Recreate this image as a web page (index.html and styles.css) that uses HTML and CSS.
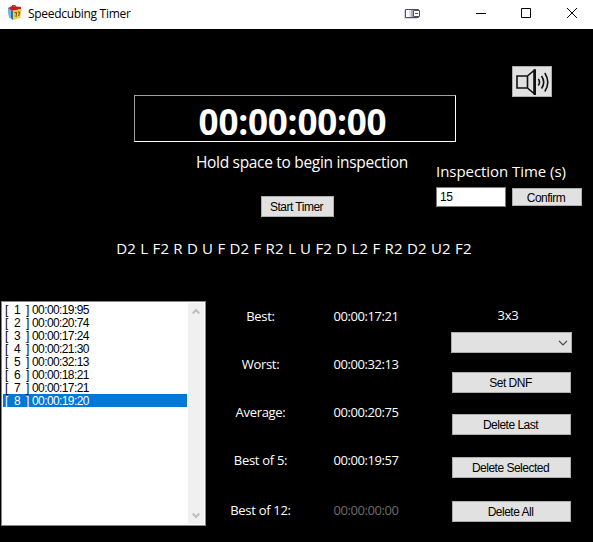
FILE: index.html
```html
<!DOCTYPE html>
<html lang="en">
<head>
<meta charset="utf-8">
<title>Speedcubing Timer</title>
<link rel="stylesheet" href="styles.css">
</head>
<body>
<header class="titlebar">
  <svg class="app-icon" width="16" height="16" viewBox="0 0 16 16">
    <path d="M1 3 6 6v9l-4-3z" fill="#2870b8"/>
    <path d="M1 3l3 1.500v9L2 12z" fill="#70b8d8"/>
    <path d="M1 3 5 1l9 1v2L6 6z" fill="#c51c20"/>
    <path d="M5 1 7 0l2 1.500" fill="none" stroke="#701010"/>
    <path d="M6 5.500l8.500-1.500-1.200 9L6 15z" fill="#f4cb44"/>
    <path d="M7.500 7.500h2l-.5 4.500M10.800 7h1.700l-.8 4" fill="none" stroke="#5c3b08" stroke-width=".9"/>
  </svg>
  <span class="app-title">Speedcubing Timer</span>
  <svg class="dock-icon" width="18" height="13" viewBox="0 0 18 13">
    <path d="M0 2h13v9H0z" fill="#d4d4da"/>
    <path d="M1.500 1.500h13v8h-13z" fill="#fff" stroke="#50505e"/>
    <path d="M5 2h2v7H5z" fill="#e2e2e6"/><path d="M7 2h2v7H7z" fill="#aaaab2"/>
    <path d="M9.500 2.500h6v6h-6z" fill="#fff" stroke="#50505e"/><path d="M11 5.500h3" stroke="#50505e"/>
  </svg>
  <svg class="window-controls" width="103" height="12" viewBox="0 0 103 12" fill="none" stroke="#000">
    <path d="M0 6.500h10"/><path d="M45.500 1.500h9v9h-9z"/><path d="M91 1l10 10M101 1 91 11"/>
  </svg>
</header>
<main>
  <section class="clock-row">
    <div class="clock"><span>00:00:00:00</span></div>
    <button class="sound" aria-label="Sound">
      <svg width="38" height="29" viewBox="0 0 38 29" fill="none" stroke="#111" stroke-width="1.600">
        <path d="M4 9h10.500v12H4zM14.500 9l6.500-5.500v23L14.500 21M22.200 2.200v25.600M20.500 3h2.500M20.500 27.200h2.500"/>
        <path d="M25.300 12q2.400 3.200 0 6.500M28.500 9q4.400 6.200 0 12.500M31.800 6q6 9.200 0 18.500"/>
      </svg>
    </button>
  </section>
  <section class="controls-row">
    <div class="start-group">
      <p class="hint">Hold space to begin inspection</p>
      <button class="button start">Start Timer</button>
    </div>
    <div class="inspection">
      <label class="inspection-label" for="seconds">Inspection Time (s)</label>
      <div class="inspection-form">
        <input id="seconds" type="text" value="15">
        <button class="button confirm">Confirm</button>
      </div>
    </div>
  </section>
  <p class="scramble">D2 L F2 R D U F D2 F R2 L U F2 D L2 F R2 D2 U2 F2</p>
  <section class="results">
    <div class="listbox">
      <ul>
        <li><span class="num">1</span>00:00:19:95</li>
        <li><span class="num">2</span>00:00:20:74</li>
        <li><span class="num">3</span>00:00:17:24</li>
        <li><span class="num">4</span>00:00:21:30</li>
        <li><span class="num">5</span>00:00:32:13</li>
        <li><span class="num">6</span>00:00:18:21</li>
        <li><span class="num">7</span>00:00:17:21</li>
        <li class="selected"><span class="num">8</span>00:00:19:20</li>
      </ul>
      <div class="scrollbar">
        <svg width="8" height="7" viewBox="0 0 8 7"><path d="M.7 5.500 4 2l3.300 3.500" fill="none" stroke="#bfbfbf" stroke-width="2"/></svg>
        <svg width="8" height="7" viewBox="0 0 8 7"><path d="M.7 1.500 4 5l3.300-3.500" fill="none" stroke="#bfbfbf" stroke-width="2"/></svg>
      </div>
    </div>
    <dl class="stats">
      <dt>Best:</dt><dd>00:00:17:21</dd>
      <dt>Worst:</dt><dd>00:00:32:13</dd>
      <dt>Average:</dt><dd>00:00:20:75</dd>
      <dt>Best of 5:</dt><dd>00:00:19:57</dd>
      <dt>Best of 12:</dt><dd class="empty">00:00:00:00</dd>
    </dl>
    <div class="actions">
      <span class="puzzle">3x3</span>
      <button class="dropdown" aria-label="Puzzle">
        <svg width="10" height="6" viewBox="0 0 10 6"><path d="M1 .8l4 4 4-4" fill="none" stroke="#444" stroke-width="1.200"/></svg>
      </button>
      <button class="button dnf">Set DNF</button>
      <button class="button last">Delete Last</button>
      <button class="button chosen">Delete Selected</button>
      <button class="button all">Delete All</button>
    </div>
  </section>
</main>
</body>
</html>
```
FILE: styles.css
```css
* { box-sizing: border-box; }
body {
  margin: 0;
  width: 593px;
  height: 542px;
  overflow: hidden;
  background: #000;
  color: #fff;
  font-family: "Open Sans", "Noto Sans", sans-serif;
}
p, ul, dl, dd { margin: 0; padding: 0; }
svg { display: block; }
span, p, label, dt, dd, li { white-space: nowrap; }

.titlebar {
  display: flex;
  height: 29px;
  padding-left: 7px;
  background: #fff;
  color: #000;
}
.app-icon { margin-top: 5px; }
.app-title {
  width: 381px;
  margin-left: 5px;
  font-size: 12px;
  line-height: 28px;
  letter-spacing: -0.3px;
}
.dock-icon { margin-top: 8px; margin-left: -5px; }
.window-controls { margin: 7px 0 0 54px; }

.clock-row { display: flex; height: 113px; padding-left: 134px; }
.clock {
  width: 322px;
  height: 47px;
  margin-top: 66px;
  border: 1px solid #fff;
  border-top-color: #a0a0a0;
  border-left-color: #a0a0a0;
  text-align: center;
  font-weight: 700;
  font-size: 35px;
  line-height: 51px;
  letter-spacing: -0.2px;
  padding-right: 5px;
}
button {
  padding: 0;
  background: #e1e1e1;
  border: 1px solid #adadad;
  border-radius: 0;
  color: #000;
}
.sound { width: 40px; height: 31px; margin: 37px 0 0 56px; }

.button, .listbox, input {
  font-family: "Liberation Sans", Arial, sans-serif;
  font-size: 12px;
  letter-spacing: -0.5px;
}
.button { height: 21px; line-height: 19px; padding: 1px 2px 0 0; }

.controls-row { display: flex; height: 94px; padding-left: 170px; }
.start-group { width: 264px; text-align: center; }
.hint { margin-top: 8px; font-size: 15.500px; line-height: 24px; letter-spacing: -0.31px; }
.start { display: block; width: 73px; margin: 22px 0 0 91px; }
.inspection { padding: 17px 0 0 2px; }
.inspection-label { display: block; font-size: 15px; line-height: 24px; letter-spacing: -0.05px; }
.inspection-form { display: flex; gap: 6px; margin-top: 4px; align-items: center; }
input {
  width: 70px;
  height: 20px;
  padding: 0 3px;
  border: 1px solid #7a7a7a;
  background: #fff;
  color: #000;
}
.confirm { width: 70px; height: 18px; line-height: 16px; }

.scramble {
  height: 65px;
  padding-right: 5px;
  text-align: center;
  font-size: 15px;
  line-height: 24px;
  letter-spacing: 0.22px;
}

.results { display: flex; padding-left: 1px; }
.listbox {
  display: flex;
  width: 205px;
  height: 225px;
  padding: 1px;
  border: 1px solid #828790;
  background: #fff;
  color: #000;
}
.listbox ul { width: 184px; list-style: none; }
.listbox li { height: 13px; padding-left: 2px; line-height: 14px; letter-spacing: -0.6px; }
.num { display: inline-block; width: 27px; }
.num::before { content: "["; display: inline-block; width: 9px; }
.num::after { content: "]"; display: inline-block; margin-left: 6px; }
.selected { background: #0078d7; color: #fff; }
.scrollbar {
  display: flex;
  flex-direction: column;
  justify-content: space-between;
  width: 16px;
  margin-left: 1px;
  padding: 5px 4px;
  background: #f0f0f0;
}

.stats {
  display: grid;
  grid-template-columns: 109px 97px;
  grid-template-rows: 48px 48px 48px 50px 30px;
  margin-top: 5px;
  text-align: center;
  font-size: 13px;
  line-height: 20px;
  letter-spacing: -0.3px;
}
.stats dd { padding-left: 5px; letter-spacing: -0.45px; }
.empty { color: #6d6d6d; }

.actions {
  display: flex;
  flex-direction: column;
  align-items: center;
  width: 121px;
  margin-left: 39px;
}
.puzzle { margin: 4px 7px 0 0; font-size: 13px; line-height: 20px; letter-spacing: -0.3px; }
.dropdown { display: flex; justify-content: flex-end; align-items: center; width: 121px; height: 21px; margin-top: 7px; padding-right: 3px; }
.actions .button { width: 119px; }
.dnf { margin-top: 19px; }
.last { margin-top: 21px; }
.chosen { margin-top: 22px; }
.all { margin-top: 23px; }
```
